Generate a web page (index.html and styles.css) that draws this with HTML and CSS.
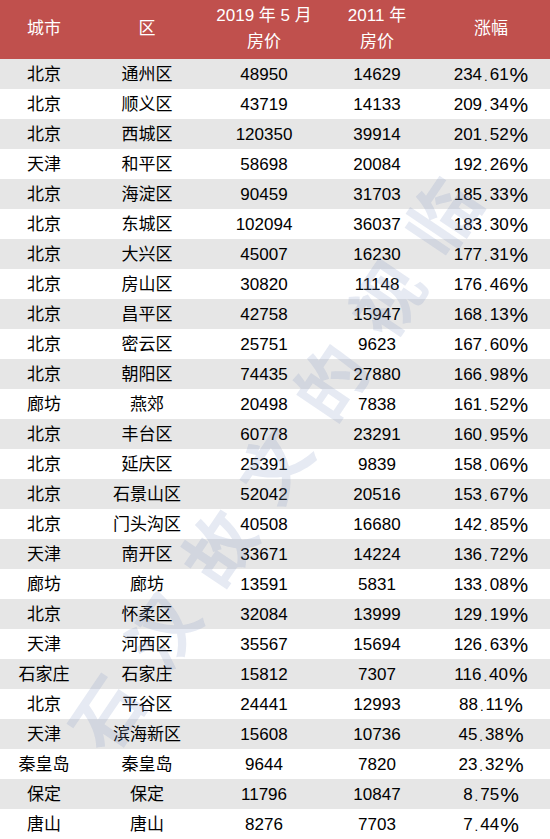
FILE: index.html
```html
<!DOCTYPE html>
<html lang="zh-CN">
<head>
<meta charset="utf-8">
<title>房价涨幅</title>
<link rel="stylesheet" href="styles.css">
</head>
<body>
<div class="wrap">
<div class="tbl">
<div class="row head"><div>城市</div><div>区</div><div>2019 年 5 月<br>房价</div><div>2011 年<br>房价</div><div>涨幅</div></div>
<div class="row"><div>北京</div><div>通州区</div><div>48950</div><div>14629</div><div>234<span class="dot">.</span>61<span class="pct">%</span></div></div>
<div class="row"><div>北京</div><div>顺义区</div><div>43719</div><div>14133</div><div>209<span class="dot">.</span>34<span class="pct">%</span></div></div>
<div class="row"><div>北京</div><div>西城区</div><div>120350</div><div>39914</div><div>201<span class="dot">.</span>52<span class="pct">%</span></div></div>
<div class="row"><div>天津</div><div>和平区</div><div>58698</div><div>20084</div><div>192<span class="dot">.</span>26<span class="pct">%</span></div></div>
<div class="row"><div>北京</div><div>海淀区</div><div>90459</div><div>31703</div><div>185<span class="dot">.</span>33<span class="pct">%</span></div></div>
<div class="row"><div>北京</div><div>东城区</div><div>102094</div><div>36037</div><div>183<span class="dot">.</span>30<span class="pct">%</span></div></div>
<div class="row"><div>北京</div><div>大兴区</div><div>45007</div><div>16230</div><div>177<span class="dot">.</span>31<span class="pct">%</span></div></div>
<div class="row"><div>北京</div><div>房山区</div><div>30820</div><div>11148</div><div>176<span class="dot">.</span>46<span class="pct">%</span></div></div>
<div class="row"><div>北京</div><div>昌平区</div><div>42758</div><div>15947</div><div>168<span class="dot">.</span>13<span class="pct">%</span></div></div>
<div class="row"><div>北京</div><div>密云区</div><div>25751</div><div>9623</div><div>167<span class="dot">.</span>60<span class="pct">%</span></div></div>
<div class="row"><div>北京</div><div>朝阳区</div><div>74435</div><div>27880</div><div>166<span class="dot">.</span>98<span class="pct">%</span></div></div>
<div class="row"><div>廊坊</div><div>燕郊</div><div>20498</div><div>7838</div><div>161<span class="dot">.</span>52<span class="pct">%</span></div></div>
<div class="row"><div>北京</div><div>丰台区</div><div>60778</div><div>23291</div><div>160<span class="dot">.</span>95<span class="pct">%</span></div></div>
<div class="row"><div>北京</div><div>延庆区</div><div>25391</div><div>9839</div><div>158<span class="dot">.</span>06<span class="pct">%</span></div></div>
<div class="row"><div>北京</div><div>石景山区</div><div>52042</div><div>20516</div><div>153<span class="dot">.</span>67<span class="pct">%</span></div></div>
<div class="row"><div>北京</div><div>门头沟区</div><div>40508</div><div>16680</div><div>142<span class="dot">.</span>85<span class="pct">%</span></div></div>
<div class="row"><div>天津</div><div>南开区</div><div>33671</div><div>14224</div><div>136<span class="dot">.</span>72<span class="pct">%</span></div></div>
<div class="row"><div>廊坊</div><div>廊坊</div><div>13591</div><div>5831</div><div>133<span class="dot">.</span>08<span class="pct">%</span></div></div>
<div class="row"><div>北京</div><div>怀柔区</div><div>32084</div><div>13999</div><div>129<span class="dot">.</span>19<span class="pct">%</span></div></div>
<div class="row"><div>天津</div><div>河西区</div><div>35567</div><div>15694</div><div>126<span class="dot">.</span>63<span class="pct">%</span></div></div>
<div class="row"><div>石家庄</div><div>石家庄</div><div>15812</div><div>7307</div><div>116<span class="dot">.</span>40<span class="pct">%</span></div></div>
<div class="row"><div>北京</div><div>平谷区</div><div>24441</div><div>12993</div><div>88<span class="dot">.</span>11<span class="pct">%</span></div></div>
<div class="row"><div>天津</div><div>滨海新区</div><div>15608</div><div>10736</div><div>45<span class="dot">.</span>38<span class="pct">%</span></div></div>
<div class="row"><div>秦皇岛</div><div>秦皇岛</div><div>9644</div><div>7820</div><div>23<span class="dot">.</span>32<span class="pct">%</span></div></div>
<div class="row"><div>保定</div><div>保定</div><div>11796</div><div>10847</div><div>8<span class="dot">.</span>75<span class="pct">%</span></div></div>
<div class="row"><div>唐山</div><div>唐山</div><div>8276</div><div>7703</div><div>7<span class="dot">.</span>44<span class="pct">%</span></div></div>
</div>
<div class="watermark" aria-hidden="true">石汉故文的视临</div>
</div>
</body>
</html>
```

FILE: styles.css
```css
html, body {
  margin: 0;
  padding: 0;
  background: #ffffff;
}
.wrap {
  position: relative;
  width: 550px;
  height: 839px;
  overflow: hidden;
}
.tbl {
  width: 550px;
  display: flex;
  flex-direction: column;
  font-family: "Liberation Sans", "Noto Sans CJK SC", sans-serif;
  color: #000000;
}
.row {
  display: grid;
  grid-template-columns: 88px 118px 116px 110px 118px;
  height: 30px;
  flex: none;
}
.row > div {
  display: flex;
  align-items: center;
  justify-content: center;
  text-align: center;
  white-space: nowrap;
  font-size: 17px;
  line-height: 1;
}
.tbl .row:nth-child(even) {
  background: #e6e6e6;
}
.row.head {
  height: 59px;
  background: #c0504d;
  color: #ffffff;
}
.row.head > div {
  font-size: 17px;
  line-height: 26px;
  padding-bottom: 1px;
}
.dot {
  display: inline-block;
  margin: 0 2px;
  position: relative;
  top: 2px;
  font-size: 13px;
}
.pct {
  font-size: 21px;
  font-family: "Liberation Sans", sans-serif;
  margin-left: 1px;
  line-height: 1;
}
.watermark {
  position: absolute;
  left: 280px;
  top: 400px;
  width: 800px;
  margin-left: -400px;
  text-align: center;
  font-family: "Noto Sans CJK SC", sans-serif;
  font-weight: 700;
  font-size: 70px;
  letter-spacing: 30px;
  color: rgba(130, 150, 195, 0.2);
  transform: rotate(-56deg);
  pointer-events: none;
  white-space: nowrap;
}
```
